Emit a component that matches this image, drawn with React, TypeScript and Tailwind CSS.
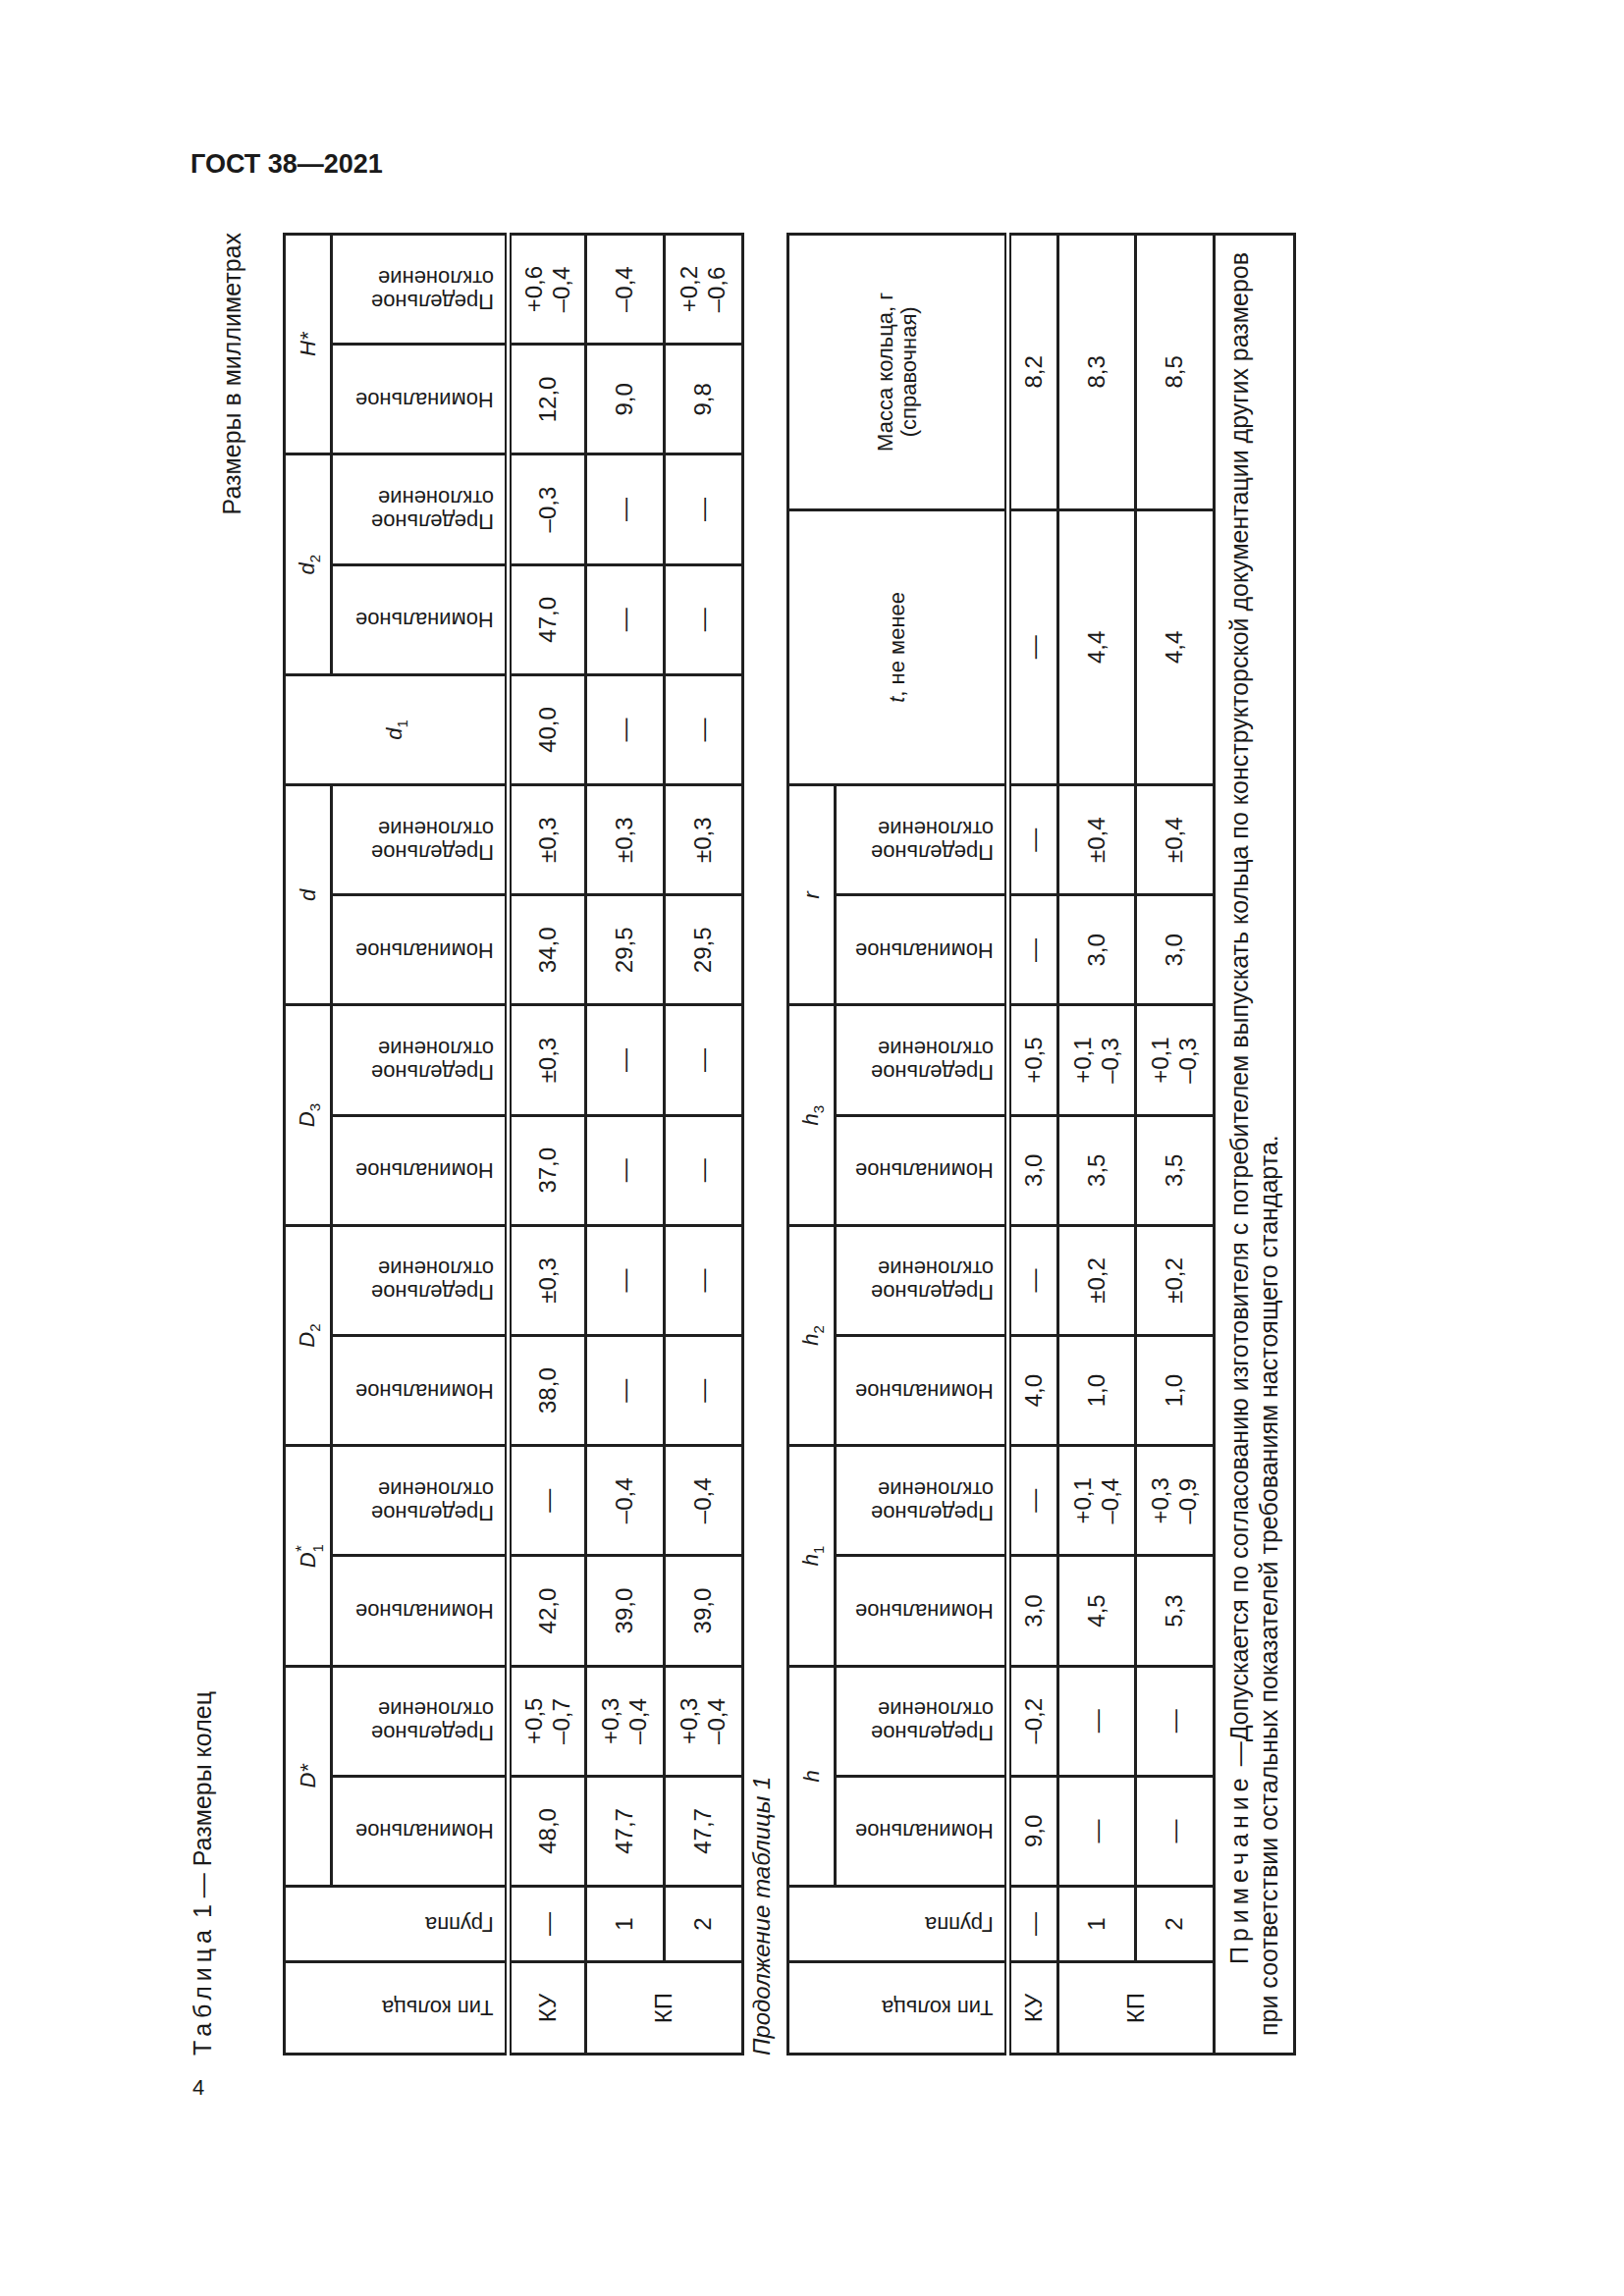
import React from "react";

const LINE = "border-[3px] border-solid border-[#1f1f1f]";
const DBL = "border-b-[7px] [border-bottom-style:double]";

type Val = string | string[];

function HV({
  children,
  rowSpan,
  colSpan,
  last,
}: {
  children: React.ReactNode;
  rowSpan?: number;
  colSpan?: number;
  last?: boolean;
}) {
  return (
    <td rowSpan={rowSpan} colSpan={colSpan} className={`${LINE} ${last ? DBL : ""} align-bottom p-0 pb-[11px]`}>
      <div className="flex justify-center">
        <div className="[writing-mode:vertical-rl] rotate-180 text-left text-[22px] leading-[24px] whitespace-nowrap">
          {children}
        </div>
      </div>
    </td>
  );
}

function Sym({
  children,
  rowSpan,
  colSpan,
  last,
}: {
  children: React.ReactNode;
  rowSpan?: number;
  colSpan?: number;
  last?: boolean;
}) {
  return (
    <td
      rowSpan={rowSpan}
      colSpan={colSpan}
      className={`${LINE} ${last ? DBL : ""} p-0 text-center align-middle text-[22px] leading-[24px] italic`}
    >
      {children}
    </td>
  );
}

function HText({
  children,
  rowSpan,
  colSpan,
}: {
  children: React.ReactNode;
  rowSpan?: number;
  colSpan?: number;
}) {
  return (
    <td rowSpan={rowSpan} colSpan={colSpan} className={`${LINE} ${DBL} p-0 text-center align-middle text-[22px] leading-[24px]`}>
      {children}
    </td>
  );
}

function D({ v, rowSpan }: { v: Val; rowSpan?: number }) {
  const lines = Array.isArray(v) ? v : [v];
  return (
    <td rowSpan={rowSpan} className={`${LINE} p-0 text-center align-middle`}>
      <div className="inline-block text-left text-[24px] leading-[28px]">
        {lines.map((l, i) => (
          <div key={i}>{l}</div>
        ))}
      </div>
    </td>
  );
}

const NOM = "Номинальное";
function Pred() {
  return (
    <>
      Предельное
      <br />
      отклонение
    </>
  );
}

function Pair() {
  return (
    <>
      <HV last>{NOM}</HV>
      <HV last>
        <Pred />
      </HV>
    </>
  );
}

function Sub({ base, sub }: { base: string; sub: string }) {
  return (
    <span className="whitespace-nowrap">
      <i>{base}</i>
      <span className="relative top-[6px] text-[15px] not-italic">{sub}</span>
    </span>
  );
}

function SubStar({ base, sub }: { base: string; sub: string }) {
  return (
    <span className="relative inline-block mr-[9px]">
      <i>{base}</i>
      <span className="absolute left-full bottom-[-5px] text-[15px] leading-[15px] not-italic">{sub}</span>
      <span className="absolute left-full top-[-3px] text-[17px] leading-[17px]">*</span>
    </span>
  );
}

const t1rows: { type?: string; typeSpan?: number; h: string; vals: Val[] }[] = [
  {
    type: "КУ",
    h: "h-[79px]",
    vals: ["—", "48,0", ["+0,5", "–0,7"], "42,0", "—", "38,0", "±0,3", "37,0", "±0,3", "34,0", "±0,3", "40,0", "47,0", "–0,3", "12,0", ["+0,6", "–0,4"]],
  },
  {
    type: "КП",
    typeSpan: 2,
    h: "h-[80px]",
    vals: ["1", "47,7", ["+0,3", "–0,4"], "39,0", "–0,4", "—", "—", "—", "—", "29,5", "±0,3", "—", "—", "—", "9,0", "–0,4"],
  },
  {
    h: "h-[80px]",
    vals: ["2", "47,7", ["+0,3", "–0,4"], "39,0", "–0,4", "—", "—", "—", "—", "29,5", "±0,3", "—", "—", "—", "9,8", ["+0,2", "–0,6"]],
  },
];

const t2rows: { type?: string; typeSpan?: number; h: string; vals: Val[] }[] = [
  {
    type: "КУ",
    h: "h-[51px]",
    vals: ["—", "9,0", "–0,2", "3,0", "—", "4,0", "—", "3,0", "+0,5", "—", "—", "—", "8,2"],
  },
  {
    type: "КП",
    typeSpan: 2,
    h: "h-[79px]",
    vals: ["1", "—", "—", "4,5", ["+0,1", "–0,4"], "1,0", "±0,2", "3,5", ["+0,1", "–0,3"], "3,0", "±0,4", "4,4", "8,3"],
  },
  {
    h: "h-[80px]",
    vals: ["2", "—", "—", "5,3", ["+0,3", "–0,9"], "1,0", "±0,2", "3,5", ["+0,1", "–0,3"], "3,0", "±0,4", "4,4", "8,5"],
  },
];

function Table1() {
  return (
    <table className="table-fixed border-collapse w-[1857px] mt-[37px]">
      <colgroup>
        <col className="w-[94px]" />
        <col className="w-[77px]" />
        {Array.from({ length: 15 }).map((_, i) => (
          <col key={i} className="w-[112.2px]" />
        ))}
      </colgroup>
      <tbody>
        <tr className="h-[48px]">
          <HV rowSpan={2} last>
            Тип кольца
          </HV>
          <HV rowSpan={2} last>
            Группа
          </HV>
          <Sym colSpan={2}>
            <i>D</i>*
          </Sym>
          <Sym colSpan={2}>
            <SubStar base="D" sub="1" />
          </Sym>
          <Sym colSpan={2}>
            <Sub base="D" sub="2" />
          </Sym>
          <Sym colSpan={2}>
            <Sub base="D" sub="3" />
          </Sym>
          <Sym colSpan={2}>d</Sym>
          <Sym rowSpan={2} last>
            <Sub base="d" sub="1" />
          </Sym>
          <Sym colSpan={2}>
            <Sub base="d" sub="2" />
          </Sym>
          <Sym colSpan={2}>
            <i>H</i>*
          </Sym>
        </tr>
        <tr className="h-[180px]">
          <Pair />
          <Pair />
          <Pair />
          <Pair />
          <Pair />
          <Pair />
          <Pair />
        </tr>
        {t1rows.map((r, i) => (
          <tr key={i} className={r.h}>
            {r.type && <D v={r.type} rowSpan={r.typeSpan} />}
            {r.vals.map((v, j) => (
              <D key={j} v={v} />
            ))}
          </tr>
        ))}
      </tbody>
    </table>
  );
}

const NOTE_WORDS = [
  "—Допускается",
  "по",
  "согласованию",
  "изготовителя",
  "с",
  "потребителем",
  "выпускать",
  "кольца",
  "по",
  "конструкторской",
  "документации",
  "других",
  "размеров",
];

function Table2() {
  return (
    <table className="table-fixed border-collapse w-[1857px] mt-[10px]">
      <colgroup>
        <col className="w-[94px]" />
        <col className="w-[77px]" />
        {Array.from({ length: 10 }).map((_, i) => (
          <col key={i} className="w-[112.2px]" />
        ))}
        <col className="w-[280.5px]" />
        <col className="w-[280.5px]" />
      </colgroup>
      <tbody>
        <tr className="h-[48px]">
          <HV rowSpan={2} last>
            Тип кольца
          </HV>
          <HV rowSpan={2} last>
            Группа
          </HV>
          <Sym colSpan={2}>h</Sym>
          <Sym colSpan={2}>
            <Sub base="h" sub="1" />
          </Sym>
          <Sym colSpan={2}>
            <Sub base="h" sub="2" />
          </Sym>
          <Sym colSpan={2}>
            <Sub base="h" sub="3" />
          </Sym>
          <Sym colSpan={2}>r</Sym>
          <HText rowSpan={2}>
            <i>t</i>, не менее
          </HText>
          <HText rowSpan={2}>
            Масса кольца, г
            <br />
            (справочная)
          </HText>
        </tr>
        <tr className="h-[176px]">
          <Pair />
          <Pair />
          <Pair />
          <Pair />
          <Pair />
        </tr>
        {t2rows.map((r, i) => (
          <tr key={i} className={r.h}>
            {r.type && <D v={r.type} rowSpan={r.typeSpan} />}
            {r.vals.map((v, j) => (
              <D key={j} v={v} />
            ))}
          </tr>
        ))}
        <tr className="h-[82px]">
          <td colSpan={14} className={`${LINE} px-[17px] pt-[9px] pb-[9px] text-[25px] leading-[30px] align-top`}>
            <div className="flex justify-between whitespace-nowrap pl-[73px]">
              <span>
                <span className="tracking-[5px]">Примечание</span>
                {"  "}
              </span>
              {NOTE_WORDS.map((w, i) => (
                <span key={i}>{w}</span>
              ))}
            </div>
            <div className="whitespace-nowrap">
              при соответствии остальных показателей требованиям настоящего стандарта.
            </div>
          </td>
        </tr>
      </tbody>
    </table>
  );
}

export default function App() {
  return (
    <div className="w-[1654px] h-[2339px] bg-white text-[#1a1a1a] font-['Liberation_Sans',Arial,sans-serif] overflow-hidden">
      <div className="pt-[151px] pl-[194px] text-[27px] leading-[32px] font-bold">ГОСТ 38—2021</div>
      <div className="mt-[54px] ml-[191px] w-[1125px] h-[1857px]">
        <div className="w-[1857px] h-[1125px] origin-top-left [transform:translateY(1857px)_rotate(-90deg)]">
          <div className="text-[25px] leading-[30px]">
            <span className="tracking-[5px]">Таблица</span> 1 — Размеры колец
          </div>
          <div className="text-[25px] leading-[30px] text-right">Размеры в миллиметрах</div>
          <Table1 />
          <div className="mt-[3px] text-[24px] leading-[30px] italic">Продолжение таблицы 1</div>
          <Table2 />
        </div>
      </div>
      <div className="mt-[20px] pl-[196px] text-[22px] leading-[26px]">4</div>
    </div>
  );
}
